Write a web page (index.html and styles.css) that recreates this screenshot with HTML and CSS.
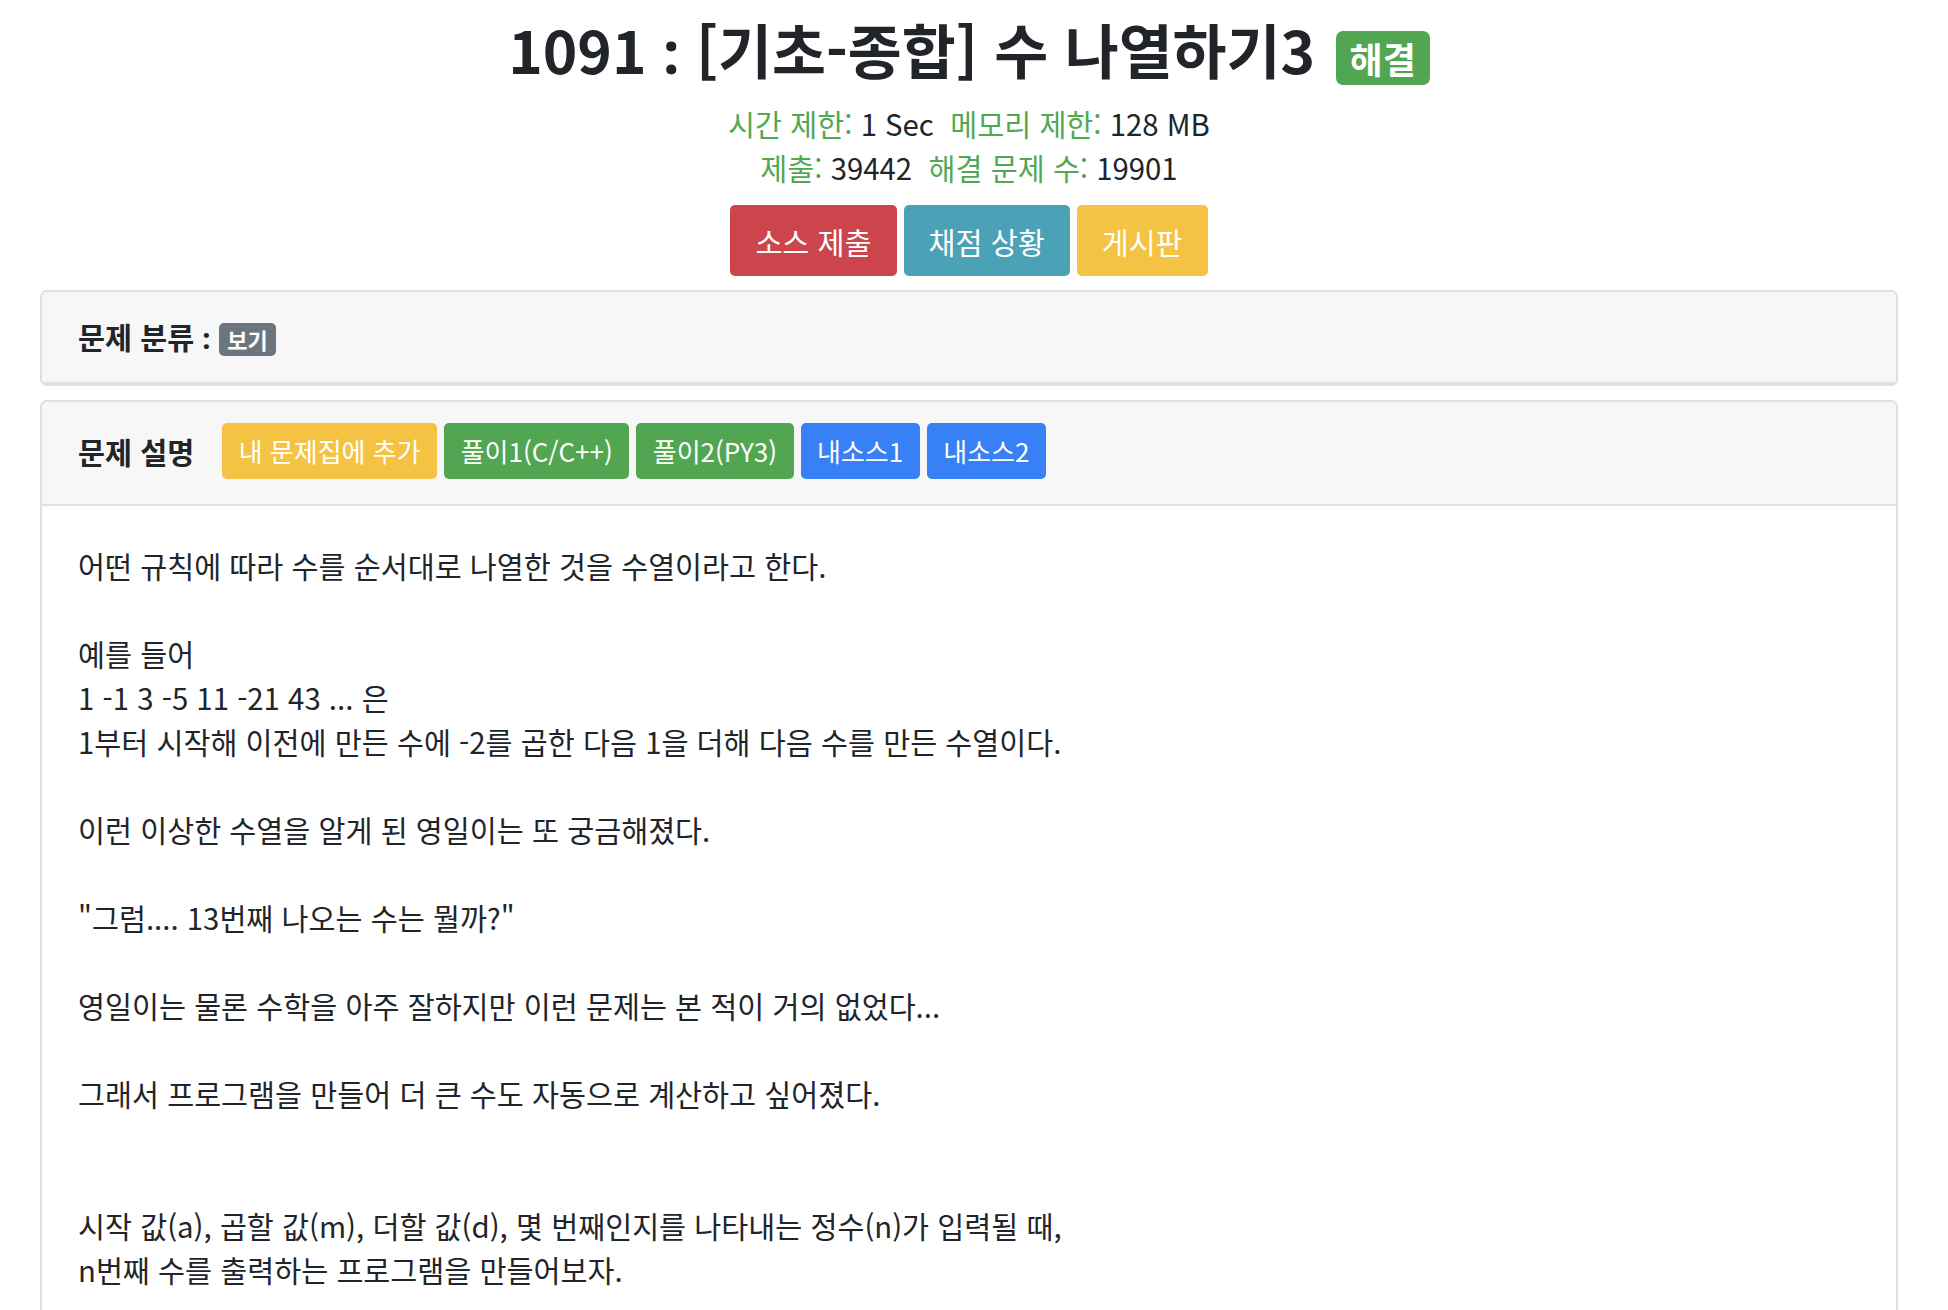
FILE: index.html
```html
<!DOCTYPE html>
<html lang="ko">
<head>
	<meta charset="utf-8">
	<title>1091 : [기초-종합] 수 나열하기3</title>
	<link rel="stylesheet" href="styles.css">
</head>
<body>
<div class="page">

	<div class="problem-head">
		<h1 class="problem-title">1091 <span class="colon">:</span> [기초-종합] 수 나열하기3 <span class="badge badge-solved">해결</span></h1>
		<p class="problem-meta"><span class="meta-label">시간 제한:</span> 1 Sec&nbsp; <span class="meta-label">메모리 제한:</span> 128 MB</p>
		<p class="problem-meta"><span class="meta-label">제출:</span> 39442&nbsp; <span class="meta-label">해결 문제 수:</span> 19901</p>

		<div class="problem-actions">
			<a class="btn btn-red" href="#">소스 제출</a>
			<a class="btn btn-teal" href="#">채점 상황</a>
			<a class="btn btn-yellow" href="#">게시판</a>
		</div>
	</div>

	<div class="panel panel-tags">
		<div class="panel-heading">
			<span class="panel-title">문제 분류 <span class="colon">:</span> <span class="badge badge-gray">보기</span></span>
		</div>
	</div>

	<div class="panel">
		<div class="panel-heading panel-tools">
			<span class="panel-title">문제 설명</span>
			<a class="btn btn-sm btn-yellow" href="#">내 문제집에 추가</a>
			<a class="btn btn-sm btn-green" href="#">풀이1(C/C++)</a>
			<a class="btn btn-sm btn-green" href="#">풀이2(PY3)</a>
			<a class="btn btn-sm btn-blue" href="#">내소스1</a>
			<a class="btn btn-sm btn-blue" href="#">내소스2</a>
		</div>
		<div class="panel-body">
			<p class="problem-text">
				어떤 규칙에 따라 수를 순서대로 나열한 것을 수열이라고 한다.<br>
				<br>
				예를 들어<br>
				1 -1 3 -5 11 -21 43 ... 은<br>
				1부터 시작해 이전에 만든 수에 -2를 곱한 다음 1을 더해 다음 수를 만든 수열이다.<br>
				<br>
				이런 이상한 수열을 알게 된 영일이는 또 궁금해졌다.<br>
				<br>
				"그럼.... 13번째 나오는 수는 뭘까?"<br>
				<br>
				영일이는 물론 수학을 아주 잘하지만 이런 문제는 본 적이 거의 없었다...<br>
				<br>
				그래서 프로그램을 만들어 더 큰 수도 자동으로 계산하고 싶어졌다.<br>
				<br>
				<br>
				시작 값(a), 곱할 값(m), 더할 값(d), 몇 번째인지를 나타내는 정수(n)가 입력될 때,<br>
				n번째 수를 출력하는 프로그램을 만들어보자.
			</p>
		</div>
	</div>

</div>
</body>
</html>
```

FILE: styles.css
```css
/* Reset */

* { margin: 0; padding: 0; box-sizing: border-box; }

body {
	font-family: "Noto Sans CJK KR", "Noto Sans", sans-serif;
	font-size: 29.33px;
	line-height: 44px;
	color: #212529;
	background-color: white;
}

a { text-decoration: none; }

/* the CJK face centres a bold colon, the reference sits it on the baseline */
.colon {
	font-family: "Noto Sans", sans-serif;
}


/* Page */

.page {
	padding: 14px 50px 0 40px;
}


/* Problem head */

.problem-head {
	text-align: center;
}

.problem-title {
	font-size: 58.67px;
	line-height: 70px;
	font-weight: 700;
	margin-bottom: 15px;
}

.problem-meta .meta-label {
	color: #52a852;
}

.problem-actions {
	display: flex;
	justify-content: center;
	gap: 7px;
	margin-top: 16px;
	margin-bottom: 14px;
}


/* Badges */

.badge {
	display: inline-block;
	color: white;
	font-weight: 700;
	line-height: 1;
	vertical-align: baseline;
}

.badge-solved {
	font-size: 36px;
	padding: 9px 14px;
	border-radius: 7px;
	background-color: #52a652;
	margin-left: 4px;
}

.badge-gray {
	font-size: 22px;
	padding: 5.5px 8.5px;
	border-radius: 5px;
	background-color: #6c757d;
}


/* Buttons */

.btn {
	display: inline-block;
	color: white;
	padding: 13.5px 25px;
	border-radius: 5px;
	line-height: 44px;
}

.btn-sm {
	font-size: 26px;
	line-height: 40px;
	padding: 8px 16.5px;
}

.btn-red { background-color: #cc454c; }
.btn-teal { background-color: #4ba2b7; }
.btn-yellow { background-color: #f5c343; }
.btn-green { background-color: #52a652; }
.btn-blue { background-color: #3880f5; }


/* Panels */

.panel {
	border: solid 2px #dfdfdf;
	border-radius: 7px;
	margin-bottom: 14px;
	overflow: hidden;
}

.panel-heading {
	background-color: #f7f7f7;
	border-bottom: solid 2px #dfdfdf;
	padding: 22px 36px;
}

.panel-title {
	font-weight: 700;
}

.panel-tools {
	display: flex;
	align-items: center;
	gap: 7px;
	padding: 21px 36px 25px;
}

.panel-tools .panel-title {
	margin-right: 21px;
}

.panel-body {
	padding: 37px 36px 36px;
}
```
